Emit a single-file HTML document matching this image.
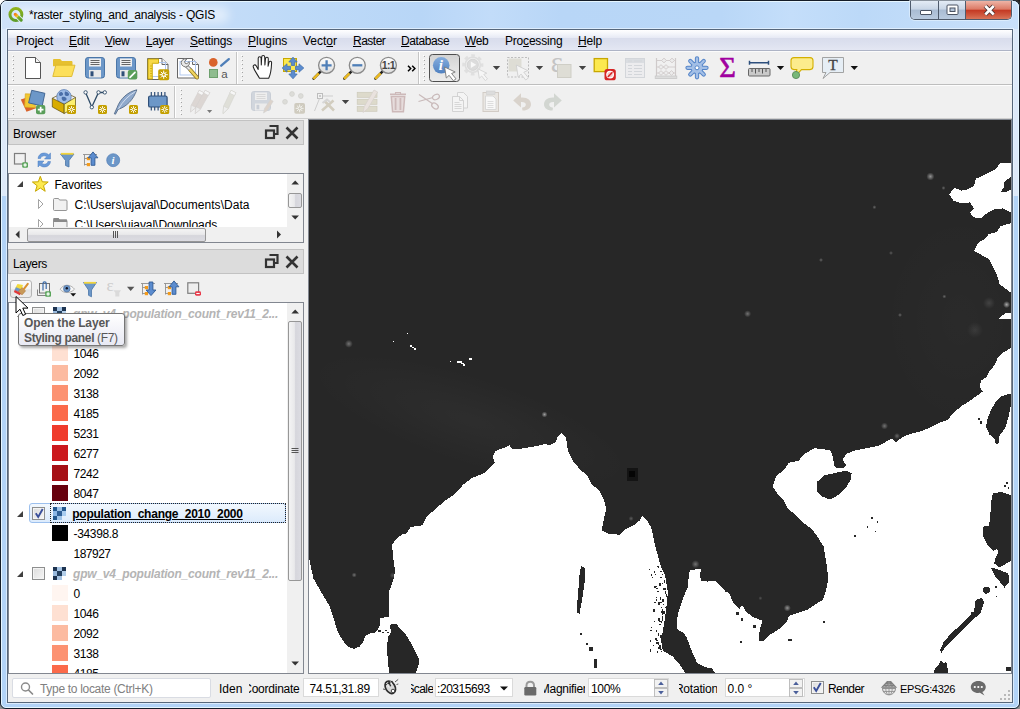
<!DOCTYPE html>
<html lang="en">
<head>
<meta charset="utf-8">
<title>*raster_styling_and_analysis - QGIS</title>
<style>
html,body{margin:0;padding:0;}
body{width:1020px;height:709px;overflow:hidden;background:#fff;position:relative;font-family:"Liberation Sans",sans-serif;font-size:12px;color:#000;}
.abs{position:absolute;}
.t{position:absolute;white-space:pre;line-height:14px;height:14px;}
u{text-decoration:underline;text-underline-offset:1px;text-decoration-skip-ink:none;}
#frame{position:absolute;left:0;top:0;width:1018px;height:707px;border:1px solid #141c28;border-radius:7px 7px 6px 6px;background:#b2d3f7;overflow:hidden;}
#frame .hl{position:absolute;left:0;top:0;right:0;bottom:0;border:1px solid #e6f6ff;border-radius:6px 6px 5px 5px;}
#client{position:absolute;left:7px;top:29px;width:1004px;height:672px;border:1px solid #57677b;background:#f0f0f0;overflow:hidden;box-shadow:0 0 0 1px rgba(235,245,255,.7);}
#menubar{position:absolute;left:0;top:0;width:1004px;height:20px;background:linear-gradient(180deg,#ffffff 0%,#f3f5fa 20%,#e6e9f4 40%,#d9ddec 42%,#dde1ef 70%,#e4e7f3 100%);border-bottom:1px solid #aeb4c6;}
#menubar .t{top:4px;color:#000;}
.tb{position:absolute;left:0;width:1004px;background:#f0f0f0;}
.ico{position:absolute;width:24px;height:24px;}
.ico16{position:absolute;width:16px;height:16px;}
.handle{position:absolute;width:2px;height:28px;background-image:linear-gradient(180deg,#fff 0,#fff 1px,transparent 1px),linear-gradient(180deg,transparent 0,transparent 1px,#a3a3a3 1px,#a3a3a3 2px,transparent 2px);background-size:1px 4px,1px 4px;background-position:0 0,1px 0;background-repeat:repeat-y,repeat-y;}
.sep{position:absolute;width:1px;background:#c5c5c5;border-right:1px solid #fff;}
.arrow{position:absolute;width:0;height:0;border-left:3.5px solid transparent;border-right:3.5px solid transparent;border-top:4px solid #222;}
.docktitle{position:absolute;background:#dcdcdc;border:1px solid #c2c2c2;box-sizing:border-box;}
.tree{position:absolute;background:#fff;border:1px solid #828790;box-sizing:border-box;overflow:hidden;}
.sw{position:absolute;width:16px;height:16px;}
.field{position:absolute;background:#fff;border:1px solid #abadb3;box-sizing:border-box;}
#ltree .sw{left:43px;}
#ltree .n{position:absolute;left:64.500px;white-space:pre;line-height:14px;height:14px;letter-spacing:-0.400px;}
#ltree .g{position:absolute;left:64px;white-space:pre;line-height:14px;height:14px;font-weight:bold;font-style:italic;color:#b4b4b4;letter-spacing:-0.200px;}
#ltree .cb{position:absolute;left:23px;width:11px;height:11px;border:1px solid #8e8f8f;background:linear-gradient(135deg,#dcdcdc 0%,#f6f6f6 100%);box-shadow:inset 0 0 0 1px #f4f4f4;}
#ltree .ex{position:absolute;left:8px;width:0;height:0;border-left:6px solid transparent;border-bottom:6px solid #404040;}
#ltree .ri{position:absolute;left:44px;width:13px;height:13px;}
</style>
</head>
<body>
<div class="abs" style="left:0;top:700px;width:8px;height:9px;background:linear-gradient(45deg,#9a9a9a 0%,#6a6a6a 50%,#222 100%);"></div>
<div class="abs" style="left:1012px;top:700px;width:8px;height:9px;background:linear-gradient(-45deg,#9a9a9a 0%,#6a6a6a 50%,#222 100%);"></div>
<div id="frame">
 <div class="abs" style="left:0;top:0;width:1018px;height:195px;background:#dde9f9;"></div>
 <div class="abs" style="left:0;top:0;width:1018px;height:28px;background:linear-gradient(90deg,#cfe2f9 0px,#c3dcf8 230px,#bedaf8 300px,#b8d6f7 420px,#c2dcf9 490px,#b8d6f7 560px,#b9d7f7 720px,#c4defa 790px,#bcd9f8 860px,#c9e0fa 1018px);"></div>
 <div class="hl"></div>
</div>
<!-- title glow + text -->
<div class="abs" style="left:14px;top:7px;width:215px;height:16px;border-radius:8px;background:rgba(255,255,255,.5);filter:blur(5px);"></div>
<svg class="abs" style="left:6px;top:4px" width="20" height="20" viewBox="6 4 20 20">
 <defs><linearGradient id="qg" x1="0" y1="0" x2="0" y2="1"><stop offset="0" stop-color="#8fb31d"/><stop offset="1" stop-color="#5f9e2a"/></linearGradient>
 <linearGradient id="qt" gradientUnits="userSpaceOnUse" x1="14.500" y1="13.500" x2="21.500" y2="20.500"><stop offset="0" stop-color="#f47c14"/><stop offset="0.28" stop-color="#f6a21e"/><stop offset="0.42" stop-color="#e8d23a"/><stop offset="0.52" stop-color="#7fae2a"/><stop offset="1" stop-color="#559a28"/></linearGradient></defs>
 <circle cx="15.900" cy="14.550" r="5.950" fill="none" stroke="url(#qg)" stroke-width="3"/>
 <path d="M17.800 16.800l4.200 4.200" stroke="#dcebf8" stroke-width="5" stroke-linecap="butt"/>
 <path d="M15.300 14.300l5.900 5.900" stroke="url(#qt)" stroke-width="3.100" stroke-linecap="round"/>
</svg>
<div class="t" style="left:29px;top:8px;font-size:12px;letter-spacing:-0.21px;">*raster_styling_and_analysis - QGIS</div>
<!-- caption buttons -->
<div class="abs" style="left:910px;top:1px;width:102px;height:19px;border:1px solid #4f5b6c;border-top:none;border-radius:0 0 5px 5px;box-sizing:border-box;overflow:hidden;background:#c9d6e8;box-shadow:0 0 0 1px rgba(235,245,255,.55);">
  <div class="abs" style="left:0;top:0;width:27px;height:18px;background:linear-gradient(180deg,#e3ebf5 0%,#c9d6e6 45%,#a9bcd3 50%,#b9cadf 100%);border-right:1px solid #4f5b6c;"></div>
  <div class="abs" style="left:28px;top:0;width:26px;height:18px;background:linear-gradient(180deg,#e3ebf5 0%,#c9d6e6 45%,#a9bcd3 50%,#b9cadf 100%);border-right:1px solid #4f5b6c;"></div>
  <div class="abs" style="left:55px;top:0;width:46px;height:18px;background:linear-gradient(180deg,#eeb4a6 0%,#dc7a66 45%,#c43a24 52%,#d05a40 80%,#d9755a 100%);"></div>
  <div class="abs" style="left:9px;top:9px;width:10px;height:3px;background:#fff;border:1px solid #4a5362;border-radius:1px;"></div>
  <svg class="abs" style="left:34px;top:2px" width="16" height="14" viewBox="0 0 16 14"><rect x="2" y="2" width="11" height="9.500" rx="1" fill="#fff" stroke="#4a5362" stroke-width="1"/><rect x="5" y="5" width="5" height="3.500" fill="#b5c4d8" stroke="#4a5362" stroke-width="1"/></svg>
  <svg class="abs" style="left:70px;top:2px" width="16" height="14" viewBox="0 0 16 14"><path d="M4.300 3 L12.700 11.500 M12.700 3 L4.300 11.500" stroke="#4a3434" stroke-width="4.400" stroke-linecap="butt"/><path d="M4.300 3 L12.700 11.500 M12.700 3 L4.300 11.500" stroke="#fff" stroke-width="2.600" stroke-linecap="butt"/></svg>
</div>
<div class="abs" style="left:1013px;top:0;width:7px;height:7px;background:linear-gradient(225deg,#111 0%,#444 40%,#777 70%,rgba(180,190,200,0) 100%);z-index:-1;"></div>
<div id="client">
<div id="menubar">
 <div class="t" style="left:8px;">Pro<u>j</u>ect</div>
 <div class="t" style="left:61px;"><u>E</u>dit</div>
 <div class="t" style="left:97px;letter-spacing:-0.4px"><u>V</u>iew</div>
 <div class="t" style="left:138px;letter-spacing:-0.4px"><u>L</u>ayer</div>
 <div class="t" style="left:182px;letter-spacing:-0.15px"><u>S</u>ettings</div>
 <div class="t" style="left:240px;"><u>P</u>lugins</div>
 <div class="t" style="left:295px;">Vect<u>o</u>r</div>
 <div class="t" style="left:345px;letter-spacing:-0.5px"><u>R</u>aster</div>
 <div class="t" style="left:393px;letter-spacing:-0.4px"><u>D</u>atabase</div>
 <div class="t" style="left:457px;letter-spacing:-0.4px"><u>W</u>eb</div>
 <div class="t" style="left:497px;letter-spacing:-0.2px">Pro<u>c</u>essing</div>
 <div class="t" style="left:570px;letter-spacing:-0.2px"><u>H</u>elp</div>
</div>
<!-- TOOLBARS (client coords: page - 8, page - 30) -->
<div class="abs" style="left:0;top:21px;width:1004px;height:1px;background:#fbfbfb;"></div>
<div class="abs" style="left:0;top:54px;width:1004px;height:1px;background:#bebebe;"></div>
<div class="abs" style="left:0;top:55px;width:1004px;height:1px;background:#fdfdfd;"></div>
<div class="handle" style="left:4px;top:25px;"></div>
<div class="handle" style="left:233px;top:25px;"></div>
<div class="handle" style="left:415px;top:25px;"></div>
<div class="handle" style="left:4px;top:59px;"></div>
<div class="handle" style="left:172px;top:59px;"></div>
<div class="sep" style="left:228px;top:22px;height:32px;"></div>
<div class="sep" style="left:410px;top:22px;height:32px;"></div>
<div class="sep" style="left:166px;top:56px;height:32px;"></div>
<svg class="abs" style="left:0;top:21px;overflow:visible" width="1004" height="68" viewBox="8 51 1004 68" font-family="Liberation Sans, sans-serif">
<defs>
 <linearGradient id="gLens" x1="0" y1="0" x2="0" y2="1"><stop offset="0" stop-color="#ffffff"/><stop offset="1" stop-color="#dcdcdc"/></linearGradient>
 <linearGradient id="gBtn" x1="0" y1="0" x2="0" y2="1"><stop offset="0" stop-color="#d2d2d2"/><stop offset="0.5" stop-color="#e2e2e2"/><stop offset="1" stop-color="#ebebeb"/></linearGradient>
 <linearGradient id="gInfo" x1="0" y1="0" x2="0" y2="1"><stop offset="0" stop-color="#86aede"/><stop offset="1" stop-color="#4f80c0"/></linearGradient>
 <g id="badge"><rect x="0" y="0" width="9" height="9" rx="1.600" fill="#c4a000"/><path d="M4.500 1.100v6.800M1.100 4.500h6.800M2.100 2.100l4.800 4.800M6.900 2.100l-4.800 4.800" stroke="#fff" stroke-width="0.900"/><circle cx="4.500" cy="4.500" r="0.900" fill="#c4a000"/></g>
 <g id="floppy"><rect x="0.5" y="0.5" width="19" height="20.5" rx="2.6" fill="#6c97c8" stroke="#4a76a8"/><rect x="4" y="1.5" width="12" height="8" fill="#efefef"/><path d="M5.5 3.5h9M5.5 5.5h9M5.5 7.5h9" stroke="#555" stroke-width="0.9"/><rect x="4" y="13" width="12" height="7.5" fill="#e9e9e9"/><rect x="5.5" y="14.3" width="3" height="5" fill="#2f4f78"/></g>
 <g id="lens"><path d="M-5.800 6.100 L-13 13.300" stroke="#222" stroke-width="2.600" stroke-linecap="round"/><path d="M-7.800 8.100 L-13.200 13.500" stroke="#eab920" stroke-width="2.600" stroke-linecap="butt"/><circle cx="0" cy="0" r="8" fill="url(#gLens)" stroke="#8a8a8a" stroke-width="1.3"/></g>
</defs>
<!-- ROW 1 -->
<!-- new -->
<path d="M25.5 57.5h10l5 5v16h-15z" fill="#fff" stroke="#555"/><path d="M35.5 57.5v5h5" fill="#f4f4f4" stroke="#555"/>
<!-- open -->
<path d="M53 60.2c0-.7.5-1.2 1.2-1.2h6l1.8 2h9.3c.7 0 1.2.5 1.2 1.200v4h-19.500z" fill="#e6c02f"/>
<path d="M52.800 76.500l3-11.300h19.200l-3.300 11.300z" fill="#fcdf5a" stroke="#dcb82c" stroke-width="0.9"/>
<!-- save -->
<use href="#floppy" x="85" y="57"/>
<!-- save as -->
<use href="#floppy" x="116" y="57"/>
<rect x="127.800" y="70" width="9.500" height="9.500" rx="2" fill="#5a9e5a"/><path d="M130 77.300l5-5" stroke="#fff" stroke-width="1.700" stroke-linecap="round"/>
<!-- new layout -->
<path d="M147.500 58.500h14.500l6 6v15h-20.500z" fill="#fff" stroke="#666"/><path d="M162 58.500v6h6" fill="#f4f4f4" stroke="#666"/>
<rect x="150.500" y="62.500" width="15" height="14" fill="none" stroke="#a9c3ee" stroke-width="0.9"/>
<path d="M148 59h10.500v4.300h-6.200v15.700h-4.300z" fill="#f7d94a" stroke="#c8a700" stroke-width="0.9"/>
<path d="M150 66h2M150 68.500h2M150 71h2M150 73.500h2M150 76h2" stroke="#c8a700" stroke-width="0.7"/>
<rect x="158.200" y="69.200" width="11" height="11" rx="1.800" fill="#c4a000"/><circle cx="163.700" cy="74.700" r="1.700" fill="none" stroke="#fff" stroke-width="1.100"/><path d="M163.700 70.600v2.400M163.700 76.400v2.400M159.600 74.700h2.400M165.400 74.700h2.400M160.800 71.800l1.700 1.700M164.900 75.900l1.700 1.700M166.600 71.800l-1.700 1.700M162.500 75.900l-1.700 1.700" stroke="#fff" stroke-width="1"/>
<!-- layout manager -->
<path d="M177.500 58.500h15l6 6v13.500h-21z" fill="#fff" stroke="#666"/><path d="M192.500 58.500v6h6" fill="#f4f4f4" stroke="#666"/>
<rect x="180" y="61.500" width="15.500" height="13.500" fill="none" stroke="#a9c3ee" stroke-width="0.9"/>
<path d="M190 69.500l7 8" stroke="#8a7420" stroke-width="4" stroke-linecap="round"/><path d="M190 69.500l7 8" stroke="#f0d460" stroke-width="2.400" stroke-linecap="round"/>
<path d="M189.800 69.300l-3.300-3.300" stroke="#777" stroke-width="3.600"/><path d="M189.800 69.300l-3.300-3.300" stroke="#e4e4e4" stroke-width="2"/>
<path d="M183.300 66.200a3.900 3.900 0 0 0 5.900-4.600l-2.300 2.100-1.900-.5-.4-1.900 2.200-2a3.900 3.900 0 0 0-5.100 5.400z" fill="#e8e8e8" stroke="#6e6e6e" stroke-width="0.900" stroke-linejoin="round"/>
<!-- style manager -->
<circle cx="213.300" cy="62.400" r="4.300" fill="#d9632b"/>
<path d="M221.200 65.700l7.600-6.600" stroke="#4f7fb8" stroke-width="2.300" stroke-linecap="round"/>
<rect x="209.500" y="69.500" width="8" height="8" fill="#8fbc8f" stroke="#6da06d"/>
<text x="221.300" y="77.600" font-size="11.500" fill="#555">a</text>
<!-- pan hand -->
<path d="M259.500 78.300C257.500 74.500 254.300 70.500 253.300 67c-.6-2.200 1.900-2.900 3-1l1.900 3.400V58.300c0-2.100 2.900-2.100 2.900 0l.2 6.700.4-8c0-2.100 3-2.100 3 0l.2 8 .6-6.400c.2-2 2.900-1.800 2.800.2l-.2 7.400.9-3.800c.4-1.800 2.700-1.500 2.600.3-.2 6-.3 10-2.900 15.600z" fill="#fff" stroke="#222" stroke-width="1.050" stroke-linejoin="round"/>
<!-- pan to selection -->
<rect x="283.500" y="58.500" width="13" height="13" fill="#fce94f" stroke="#c8a700"/>
<g fill="#5b8ccf" stroke="#4673b0" stroke-width="0.8" stroke-linejoin="round">
<path d="M293 57.200l4.200 4.800h-2.500v3.500h-3.400v-3.500h-2.500z"/>
<path d="M293 78.800l4.200-4.800h-2.500v-3.500h-3.400v3.500h-2.500z"/>
<path d="M282.200 68l4.800-4.200v2.500h3.500v3.400h-3.500v2.500z"/>
<path d="M303.800 68l-4.800-4.200v2.500h-3.500v3.400h3.500v2.500z"/>
</g>
<!-- zoom in -->
<use href="#lens" x="326.600" y="65.300"/><path d="M321.600 65.300h10M326.600 60.300v10" stroke="#4f7fb8" stroke-width="2.300"/>
<!-- zoom out -->
<use href="#lens" x="357.300" y="65.300"/><path d="M352.300 65.300h10" stroke="#4f7fb8" stroke-width="2.300"/>
<!-- zoom 1:1 -->
<use href="#lens" x="388.400" y="65.300"/><text x="388.300" y="69" font-size="10.500" font-weight="bold" fill="#444" text-anchor="middle" letter-spacing="-0.700">1:1</text>
<!-- chevron -->
<path d="M408 65.800l2.700 2.700-2.700 2.700M412.200 65.800l2.700 2.700-2.700 2.700" fill="none" stroke="#000" stroke-width="1.500"/>
<!-- identify -->
<rect x="429.500" y="54.500" width="30" height="27" rx="3" fill="url(#gBtn)" stroke="#4e4e4e"/>
<circle cx="441.200" cy="65.300" r="8.300" fill="url(#gInfo)"/>
<text x="440.800" y="70.200" font-family="Liberation Serif, serif" font-size="15" font-weight="bold" font-style="italic" fill="#fff" text-anchor="middle">i</text>
<path d="M444.600 67l1.700 11 2.800-2.700 4.300 5.500 2.600-2-4.400-5.300 3.600-1.500z" fill="#fff" stroke="#777" stroke-width="0.9" stroke-linejoin="round"/>
<!-- run action (disabled) -->
<g><circle cx="472.800" cy="64.800" r="9.300" fill="none" stroke="#e0e0e0" stroke-width="2.600" stroke-dasharray="3.700 3.600" stroke-dashoffset="1.800"/><circle cx="472.800" cy="64.800" r="7.600" fill="#f0f0f0" stroke="#dedede" stroke-width="1.600"/><circle cx="472.800" cy="64.800" r="5.600" fill="#dcdcdc" stroke="#d0d0d0" stroke-width="0.800"/><path d="M470.800 61.600l5.400 3.200-5.400 3.200z" fill="#f8f8f8"/><path d="M477.800 68.800l1.500 9.500 2.400-2.300 3.600 4.600 2.200-1.700-3.700-4.500 3-1.200z" fill="#f6f6f6" stroke="#d4d4d4" stroke-width="0.900" stroke-linejoin="round"/></g>
<path d="M492.800 66h7.400l-3.700 4z" fill="#444"/>
<!-- select (disabled) -->
<rect x="507.500" y="57.500" width="21" height="19.500" fill="none" stroke="#bdbdbd" stroke-dasharray="2 1.500"/>
<rect x="508.500" y="58.500" width="13" height="13" fill="#deddd5"/>
<path d="M516.300 65l1.800 12 3-2.900 4.600 5.900 2.800-2.100-4.700-5.700 3.900-1.600z" fill="#f4f4f4" stroke="#cfcfcf" stroke-width="0.9" stroke-linejoin="round"/>
<path d="M535.800 66h7.400l-3.700 4z" fill="#444"/>
<!-- select by expression (disabled) -->
<text x="550.800" y="71.800" font-family="Liberation Serif, serif" font-size="28.500" fill="#c4c4c4">ε</text>
<rect x="557.500" y="64.500" width="13.500" height="13" fill="#deddd5" stroke="#cfcec6"/>
<path d="M578.800 66h7.400l-3.700 4z" fill="#444"/>
<!-- deselect -->
<rect x="594.200" y="58.600" width="13.300" height="13" fill="#fce94f" stroke="#c8a700" stroke-width="1.300"/>
<rect x="604.500" y="69" width="11.300" height="11.300" rx="2.600" fill="#d62424"/><circle cx="610.100" cy="74.600" r="3.300" fill="#f6c6c6" stroke="#fff" stroke-width="1.200"/><path d="M607.800 77l4.600-4.700" stroke="#d62424" stroke-width="1.500"/>
<!-- attribute table (disabled) -->
<rect x="625.500" y="58.500" width="19" height="19" fill="#ececee" stroke="#d3d6da"/><rect x="626" y="59" width="18" height="4" fill="#dadde1"/>
<path d="M628 61h4M634 61h8M628 65.500h4M634 65.500h8M628 68.500h4M634 68.500h8M628 71.500h4M634 71.500h8M628 74.500h4M634 74.500h8" stroke="#d3d6da" stroke-width="1"/>
<!-- field calculator (disabled) -->
<g stroke="#cfcaca" fill="none"><path d="M656.500 58v18M675.500 58v18" stroke-width="1.200"/><rect x="655.200" y="76" width="21.600" height="2.500" fill="#dcdcdc" stroke="#c8c8c8" stroke-width="0.8"/><path d="M656.500 60.500h19M656.500 67h19M656.500 73h19" stroke-width="0.9"/>
<path d="M661.500 60.500l2.500-2.300 2.500 2.300-2.500 2.300zM669.500 60.500l2.500-2.300 2.500 2.300-2.500 2.300zM658.500 67l2.500-2.300 2.500 2.300-2.500 2.300zM663.500 67l2.500-2.300 2.500 2.300-2.500 2.300zM658.500 73l2.500-2.300 2.500 2.300-2.500 2.300zM663.500 73l2.500-2.300 2.500 2.300-2.500 2.300zM669 73l2.500-2.300 2.500 2.300-2.500 2.300z" fill="#ececec" stroke-width="0.9"/></g>
<!-- processing gear -->
<g transform="translate(697 67.800)">
<g stroke="#5585c8" stroke-width="4.300" stroke-linecap="round"><path d="M0 -5v-4.500M0 5v4.500M-5 0h-4.500M5 0h4.500M3.540 -3.540l3.180 -3.180M-3.540 3.540l-3.180 3.180M3.540 3.540l3.180 3.180M-3.540 -3.540l-3.180 -3.180"/></g>
<circle r="6.400" fill="#5585c8"/>
<g stroke="#a3bfe6" stroke-width="2.300" stroke-linecap="round"><path d="M0 -5v-4.500M0 5v4.500M-5 0h-4.500M5 0h4.500M3.540 -3.540l3.180 -3.180M-3.540 3.540l-3.180 3.180M3.540 3.540l3.180 3.180M-3.540 -3.540l-3.180 -3.180"/></g>
<circle r="5.400" fill="#a3bfe6"/><circle r="2" fill="#fff" stroke="#5585c8" stroke-width="1"/>
</g>
<!-- sigma -->
<text x="719.300" y="77.400" font-family="Liberation Serif, serif" font-size="28.500" fill="#a1009f" stroke="#a1009f" stroke-width="0.600">Σ</text>
<!-- measure -->
<path d="M749.500 62.800h19M749.500 60.800v4M768.500 60.800v4" stroke="#2d4f7c" stroke-width="1.500"/>
<rect x="748.500" y="68.500" width="21.500" height="7.500" rx="1" fill="#c9c9c9" stroke="#666"/><path d="M752 69v3M755.500 69v4.500M759 69v3M762.500 69v4.500M766 69v3" stroke="#555" stroke-width="1"/>
<path d="M776.800 66h7.400l-3.700 4z" fill="#111"/>
<!-- map tips -->
<path d="M794 57.600h16c1.700 0 3 1.300 3 3v6c0 1.700-1.300 3-3 3h-8.500l-5.500 6 .8-6h-2.800c-1.700 0-3-1.300-3-3v-6c0-1.700 1.300-3 3-3z" fill="#fcec8c" stroke="#d4b000" stroke-width="1.100"/>
<circle cx="796" cy="75" r="3.600" fill="#78b878" stroke="#5a8a5a" stroke-width="0.9"/>
<!-- text annotation -->
<path d="M822.500 57.500h21v15h-13.500l-7 6 3-6h-3.500z" fill="#e6eef5" stroke="#9a9a9a" stroke-width="0.9"/>
<text x="833" y="70.300" font-family="Liberation Serif, serif" font-size="15.500" fill="#444" text-anchor="middle" stroke="#444" stroke-width="0.300">T</text>
<path d="M850.600 66h7.400l-3.700 4z" fill="#111"/>

<!-- ROW 2 -->
<!-- data source manager -->
<path d="M20.800 99.500l10-3.300 5.200 12-9.500 3.600z" fill="#d9632b"/>
<path d="M25.300 93.800l10.500.4-.6 13.600-10.500-.8z" fill="#f2c832" stroke="#d8a820" stroke-width="0.700"/>
<path d="M31.700 90.300l13.200 3-2.700 12.600-13.600-3z" fill="#6c97c8" stroke="#3b5f8c" stroke-width="0.900"/>
<rect x="36" y="105" width="9.300" height="9.300" rx="2" fill="#5a9e5a"/><path d="M40.650 106.800v5.700M37.800 109.650h5.700" stroke="#fff" stroke-width="1.700"/>
<!-- new geopackage cube -->
<circle cx="64" cy="96.800" r="7.200" fill="#9fbce6" stroke="#5a7eb4" stroke-width="0.8"/>
<path d="M59.500 92.500c1.500-1 3-.5 3.500 1s-1 2.500-2.500 2.500-2-2-1-3.500zM65 91.500c2 0 3.500 1 4 2.500s-1 2-2.500 2-2.500-2-1.500-4.500zM62 97c1.500-.5 4 0 4.500 1.500s-1 2.500-2.500 2.500-3-2.500-2-4z" fill="#4a6ea8"/>
<path d="M52.300 98.200l11.900 6v9.300l-11.900-6.500z" fill="#d8ac00" stroke="#5a4a10" stroke-width="0.700"/>
<path d="M64.200 104.200l11.300-6.800v9.600l-11.300 6.500z" fill="#fcf070" stroke="#5a4a10" stroke-width="0.700"/>
<path d="M52.300 98.200l4.500-2.300M75.500 97.400l-4.300-2" stroke="#5a4a10" stroke-width="0.700"/>
<use href="#badge" x="67" y="105"/>
<!-- new shapefile -->
<path d="M85.600 92.500l6.200 14.500 6.700-14.500h6.200" fill="none" stroke="#2d4a66" stroke-width="1.300"/>
<g fill="#fff" stroke="#2d4a66" stroke-width="0.900"><circle cx="85.600" cy="92.400" r="1.700"/><circle cx="91.800" cy="107.200" r="1.700"/><circle cx="98.500" cy="92.400" r="1.700"/><circle cx="104.800" cy="92.400" r="1.700"/></g>
<use href="#badge" x="98" y="105"/>
<!-- spatialite feather -->
<path d="M136.800 89.800c-8.500 2-16.500 8.500-19.800 18l-2.700 6 1.200.400 2.600-4.800c8-2.500 15.500-9.600 18.700-19.600z" fill="#8fa9cc" stroke="#48607f" stroke-width="0.800"/>
<path d="M135.500 91.500c-7 4-13 10-17 17.500" fill="none" stroke="#dfe9f6" stroke-width="0.800"/>
<use href="#badge" x="129" y="105"/>
<!-- virtual layer chip -->
<path d="M151.300 92v4M154.700 92v4M158.100 92v4M161.500 92v4M164.900 92v4M151.300 107v3.500M154.700 107v3.500M158.100 107v3.500" stroke="#2f4f78" stroke-width="1.200"/>
<rect x="148.600" y="96" width="18.500" height="11" rx="1.600" fill="#6c97c8" stroke="#2f4f78" stroke-width="1.200"/>
<use href="#badge" x="160.200" y="105"/>
<!-- disabled: current edits -->
<g stroke="#d4d0ce" stroke-width="0.600"><path d="M199.200 90.300l4.600 2.400-7.900 14.800-5.400 4.500.8-6.900z" fill="#dcd6d3"/><path d="M199.200 90.300l4.600 2.400-1.500 2.800-4.600-2.400z" fill="#f6f6f6"/><path d="M191.300 105.100l4.600 2.400-5.400 4.500z" fill="#ececec"/>
<path d="M205.200 90.300l4.600 2.400-9.200 16.400-5.400 4.500.8-6.900z" fill="#dcd6d3"/><path d="M205.200 90.300l4.600 2.400-1.500 2.800-4.600-2.400z" fill="#f6f6f6"/><path d="M196 106.700l4.600 2.400-5.400 4.500z" fill="#ececec"/></g>
<path d="M207 109.900h5.200l-2.600 3z" fill="#7a7a7a"/>
<!-- toggle editing -->
<g stroke="#d4d4ce" stroke-width="0.600"><path d="M231.100 90.300l4.800 2.400-7.500 15.800-5.400 5.100.6-7.500z" fill="#dfdfd8"/><path d="M231.100 90.300l4.800 2.400-1.400 2.900-4.800-2.400z" fill="#f6f6f6"/><path d="M223.600 106.100l4.800 2.400-5.400 5.100z" fill="#eeeeee"/></g>
<!-- save edits -->
<g opacity="0.55"><rect x="251.500" y="91.500" width="19" height="19" rx="2.400" fill="#b9c2cf" stroke="#aab4c2"/><rect x="255" y="92.500" width="12" height="7.500" fill="#eee"/><path d="M256.500 94.500h9M256.500 96.500h9M256.500 98.500h9" stroke="#bbb" stroke-width="0.800"/><rect x="255" y="103.500" width="12" height="7" fill="#eaeaea"/><rect x="256.500" y="104.800" width="2.800" height="4.500" fill="#aab4c2"/><path d="M263.500 113l1-4.500 6-9 2.700 1.700-5.800 9.300z" fill="#cdbcae" stroke="#bbb" stroke-width="0.600"/></g>
<!-- add point feature -->
<g fill="#dcdcd8" stroke="#d0d0cc" stroke-width="0.700"><circle cx="292" cy="94" r="2.400"/><circle cx="300.800" cy="96" r="2.400"/><circle cx="285" cy="101.800" r="2.400"/></g>
<rect x="294.300" y="103" width="10.700" height="10.700" rx="1.800" fill="#cfcbbf"/><circle cx="299.650" cy="108.350" r="1.600" fill="none" stroke="#f4f4f0" stroke-width="1"/><path d="M299.650 104.400v2.300M299.650 110v2.300M295.700 108.350h2.300M301.300 108.350h2.300M296.900 105.600l1.600 1.600M300.800 109.500l1.600 1.600M302.400 105.600l-1.600 1.600M298.500 109.500l-1.600 1.600" stroke="#f4f4f0" stroke-width="0.900"/>
<!-- vertex tool -->
<rect x="317.500" y="93.500" width="5" height="5" fill="#f2f2f2" stroke="#bdbdbd"/><circle cx="320" cy="96" r="1" fill="#bdbdbd"/><path d="M322.500 96h10.500M319.500 98.500l-5 12.500" stroke="#cacaca" stroke-width="0.900"/>
<path d="M322 110.500l11.500-10M324.500 101l9.500 9.500" stroke="#d2cdbf" stroke-width="2.600"/><path d="M322.500 103l4.500-3.500 3 2.500" fill="none" stroke="#d6d6d6" stroke-width="2"/>
<path d="M341.800 100h7.400l-3.700 4z" fill="#444"/>
<!-- modify attributes -->
<g fill="#dddacb" stroke="#cdcaba" stroke-width="0.700"><rect x="357.200" y="92.300" width="19.800" height="5"/><rect x="357.200" y="99.300" width="19.800" height="5"/><rect x="357.200" y="106.300" width="19.800" height="5"/></g>
<path d="M363 112.500l1.300-6 9.700-16.500 3.600 2-9.800 16.700z" fill="#e9e2de" stroke="#d6d0cc" stroke-width="0.700"/>
<!-- delete -->
<g fill="none" stroke="#cdb9b9"><path d="M390 94.300h16" stroke-width="1.600"/><path d="M395.500 94v-1.500h5v1.500" stroke-width="1.100"/><path d="M391.300 96.500l1.300 15.300h10.800l1.300-15.300z" stroke-width="1.500" fill="#e6dcdc"/><path d="M395.600 98v12M400.400 98v12" stroke-width="1.800"/></g>
<!-- cut -->
<g fill="none" stroke="#c9baba" stroke-width="1.200"><path d="M419 94.500l14 9.500M418.500 101.500l14.500-4"/><ellipse cx="436" cy="97" rx="3.600" ry="2.500" transform="rotate(-25 436 97)"/><ellipse cx="435" cy="106" rx="3.600" ry="2.500" transform="rotate(35 435 106)"/></g>
<!-- copy -->
<g fill="#f4f4f4" stroke="#cfcfcf" stroke-width="0.900"><path d="M457.500 92.500h6l4 4v11.500h-10z"/><path d="M452.500 96.500h7l4 4v11h-11z"/><path d="M459.500 96.500v4h4" fill="none"/><path d="M454.500 102.500h5M454.500 104.500h7M454.500 106.500h7M454.500 108.500h7" stroke-width="0.800"/></g>
<!-- paste -->
<rect x="483" y="92.500" width="15.500" height="19" fill="#e9e6e2" stroke="#d2ccc6"/><rect x="486.500" y="91" width="8.500" height="3.500" fill="#dcdcdc" stroke="#d0d0d0" stroke-width="0.600"/>
<path d="M485.500 96h7.500l3 3v10.500h-10.500z" fill="#f8f8f8" stroke="#d2d2d2" stroke-width="0.800"/><path d="M487.500 101.500h6M487.500 103.500h6M487.500 105.500h6M487.500 107.500h6" stroke="#d6d6d6" stroke-width="0.800"/>
<!-- undo -->
<path d="M513.200 100.500l7.800-7.300v4.300c6.500-.5 10 3 10 6.800 0 4-3.500 6.500-8.500 6.300l-.5-2.800c2.500-.2 3.800-1.500 3.800-3.200 0-1.800-1.600-2.700-4.800-2.500v5.300z" fill="#d9d3cc"/>
<!-- redo -->
<path d="M561.800 100.500l-7.800-7.300v4.300c-6.500-.5-10 3-10 6.800 0 4 3.500 6.500 8.500 6.300l.5-2.800c-2.500-.2-3.800-1.500-3.800-3.200 0-1.800 1.600-2.700 4.800-2.500v5.300z" fill="#d2d6d1"/>
</svg>
<!-- wrapper using page coordinates -->
<div id="pg" class="abs" style="left:-8px;top:-30px;width:1020px;height:709px;">
<div class="abs" style="left:8px;top:118px;width:1004px;height:1px;background:#cfcfcf;"></div>
<!-- BROWSER DOCK -->
<div class="docktitle" style="left:8px;top:120px;width:296px;height:25px;"></div>
<div class="t" style="left:13px;top:127.400px;letter-spacing:-0.140px;">Browser</div>
<svg class="abs" style="left:264px;top:124px" width="36" height="17" viewBox="264 124 36 17"><path d="M269.500 126h8v8h-2.500" fill="none" stroke="#333" stroke-width="2.200"/><rect x="266" y="130.500" width="8" height="7.500" fill="#dcdcdc" stroke="#333" stroke-width="2.200"/><path d="M286.500 127.500l11 11M297.500 127.500l-11 11" stroke="#333" stroke-width="2.600"/></svg>
<!-- browser toolbar icons -->
<svg class="abs" style="left:8px;top:148px" width="296" height="24" viewBox="8 148 296 24">
 <!-- add selected layers -->
 <rect x="14.500" y="153.500" width="10.800" height="10.500" fill="#f0f0f0" stroke="#7e7e7e" stroke-width="1.200"/><rect x="22.200" y="162.200" width="5.800" height="5.600" rx="1.200" fill="#5aa45a"/><circle cx="25.100" cy="165" r="1.700" fill="#e8f4e8"/>
 <!-- refresh -->
 <path d="M38 158.500c.3-3.500 3-5.500 6.200-5.500 1.800 0 3.300.7 4.500 1.800l1.800-1.800v6h-6l2.200-2.200c-.7-.6-1.500-1-2.500-1-1.800 0-3.200 1-3.600 2.700z" fill="#6a9ad8" stroke="#4a7cc0" stroke-width="0.500"/>
 <path d="M50.500 161.500c-.3 3.500-3 5.500-6.200 5.500-1.800 0-3.300-.7-4.500-1.800l-1.800 1.800v-6h6l-2.200 2.200c.7.600 1.500 1 2.500 1 1.800 0 3.200-1 3.600-2.700z" fill="#6a9ad8" stroke="#4a7cc0" stroke-width="0.500"/>
 <!-- filter -->
 <path d="M60.500 154h13.500l-5 6.500v6.500l-3.500-1.500v-5z" fill="#6c97c8" stroke="#4a76a8" stroke-width="0.800"/><path d="M61 153.800h12.500" stroke="#f2d43c" stroke-width="1.800"/>
 <!-- collapse all -->
 <path d="M83 154.500h14M84.500 154.500v11M84.500 158.500h2.500M84.500 164.500h2.500" fill="none" stroke="#8f8f8f" stroke-width="0.900"/><rect x="86.800" y="157" width="3.200" height="3.200" fill="#f39b1c"/><rect x="86.800" y="163" width="3.200" height="3.200" fill="#f39b1c"/>
 <path d="M93 151.900l4.900 5.900h-3v7.500h-3.800v-7.500h-3z" fill="#5b8ccf" stroke="#2f5a94" stroke-width="0.900" stroke-linejoin="round"/>
 <!-- info -->
 <circle cx="113.200" cy="160.200" r="6.500" fill="#6c97c8" stroke="#5580b8" stroke-width="0.700"/><text x="113" y="164.300" font-family="Liberation Serif, serif" font-size="11" font-weight="bold" font-style="italic" fill="#fff" text-anchor="middle">i</text>
</svg>
<!-- browser tree -->
<div class="tree" style="left:8px;top:173px;width:296px;height:70px;">
 <svg class="abs" style="left:0;top:0" width="80" height="60" viewBox="9 174 80 60">
  <path d="M23 181v6h-6z" fill="#404040"/>
  <path d="M40.3 176.300L42.300 181.800L48.200 182L43.500 185.700L45.200 191.300L40.300 188L35.400 191.300L37.100 185.700L32.400 182L38.300 181.800z" fill="#fce94f" stroke="#c8a700" stroke-width="1" stroke-linejoin="round"/>
  <path d="M38.500 199.500l4.500 4.500-4.500 4.500z" fill="#fff" stroke="#999" stroke-width="0.900"/>
  <path d="M53.500 199.500c0-.6.400-1 1-1h4l1 1.500h6.500c.6 0 1 .4 1 1v8.500c0 .6-.4 1-1 1h-11.500c-.6 0-1-.4-1-1z" fill="#f1f1f1" stroke="#8a8a8a" stroke-width="0.900"/>
  <path d="M38.500 219.500l4.500 4.500-4.500 4.500z" fill="#fff" stroke="#999" stroke-width="0.900"/>
  <path d="M53.500 219.500c0-.6.400-1 1-1h4l1 1.500h6.500c.6 0 1 .4 1 1v8.500c0 .6-.4 1-1 1h-11.500c-.6 0-1-.4-1-1z" fill="#f1f1f1" stroke="#8a8a8a" stroke-width="0.900"/><path d="M53.500 218h5l1 1.500h7.500v2.500h-13.500z" fill="#8a8a8a"/>
 </svg>
 <div class="t" style="left:45.500px;top:4.400px;letter-spacing:-0.230px;">Favorites</div>
 <div class="t" style="left:65.500px;top:24.200px;letter-spacing:0.030px;">C:\Users\ujaval\Documents\Data</div>
 <div class="t" style="left:65.500px;top:44.200px;letter-spacing:-0.050px;">C:\Users\ujaval\Downloads</div>
 <!-- h scrollbar -->
 <div class="abs" style="left:0;top:53px;width:278px;height:15px;background:#f0f0f0;"></div>
 <div class="abs" style="left:278px;top:53px;width:16px;height:15px;background:#f0f0f0;"></div>
 <div class="abs" style="left:18px;top:54px;width:177px;height:12px;border:1px solid #979797;border-radius:2px;background:linear-gradient(180deg,#f4f4f4 0%,#e9e9eb 45%,#d6d6dc 55%,#dcdce2 100%);"></div>
 <svg class="abs" style="left:0;top:53px" width="294" height="15" viewBox="9 227 294 15"><path d="M15.500 234.500l4-4v8z" fill="#333"/><path d="M281 234.500l-4-4v8z" fill="#333"/><path d="M113.500 231v7M115.500 231v7M117.500 231v7" stroke="#555" stroke-width="1"/></svg>
 <!-- v scrollbar -->
 <div class="abs" style="left:278px;top:0;width:16px;height:53px;background:#f0f0f0;"></div>
 <div class="abs" style="left:279px;top:19px;width:12px;height:13px;border:1px solid #979797;border-radius:2px;background:linear-gradient(90deg,#f4f4f4 0%,#e9e9eb 45%,#d6d6dc 55%,#dcdce2 100%);"></div>
 <svg class="abs" style="left:278px;top:0" width="16" height="53" viewBox="287 174 16 53"><path d="M295.200 180.500l3.800 4h-7.600z" fill="#333"/><path d="M295.200 219.500l3.800-4h-7.600z" fill="#333"/></svg>
</div>
<!-- LAYERS DOCK -->
<div class="docktitle" style="left:8px;top:249px;width:296px;height:25px;"></div>
<div class="t" style="left:13px;top:256.500px;letter-spacing:-0.330px;">Layers</div>
<svg class="abs" style="left:264px;top:253px" width="36" height="17" viewBox="264 124 36 17"><path d="M269.500 126h8v8h-2.500" fill="none" stroke="#333" stroke-width="2.200"/><rect x="266" y="130.500" width="8" height="7.500" fill="#dcdcdc" stroke="#333" stroke-width="2.200"/><path d="M286.500 127.500l11 11M297.500 127.500l-11 11" stroke="#333" stroke-width="2.600"/></svg>
<!-- layers toolbar -->
<div class="abs" style="left:10px;top:280px;width:22px;height:18px;border:1px solid #b5b5b5;border-radius:3px;background:linear-gradient(180deg,#fbfbfb 0%,#f2f2f2 50%,#e4e4e4 55%,#ededed 100%);box-sizing:border-box;"></div>
<svg class="abs" style="left:8px;top:277px" width="296" height="24" viewBox="8 277 296 24">
 <!-- style brush -->
 <path d="M15 288.500l2.500-4.500 5.500 1-2 5.500z" fill="#f2da3c"/><path d="M14.300 290.300l1.800-3 5 2-1.800 3z" fill="#6c97c8"/><path d="M13.800 292l1-2 6.500 3-1.500 2.200z" fill="#e03a3a"/>
 <path d="M18.300 291.200l4-3.700 3.300 3.400-3.600 4z" fill="#c89858" stroke="#a87838" stroke-width="0.500"/><path d="M24 288.800l3.800-5" stroke="#d9902f" stroke-width="2" stroke-linecap="round"/>
 <!-- add group -->
 <path d="M37.500 289.500v6h9" fill="none" stroke="#777" stroke-width="0.900"/><rect x="39.500" y="283.500" width="10" height="9.500" fill="#f0f0f0" stroke="#666" stroke-width="0.900"/><path d="M43 290.500v-7c0-2.300 3.200-2.300 3.200 0v5.500" fill="none" stroke="#3a6aa8" stroke-width="1.200"/><rect x="45.200" y="291.200" width="5.800" height="5.600" rx="1" fill="#5aa45a"/><circle cx="48.100" cy="294" r="1.700" fill="#e8f4e8"/>
 <!-- eye -->
 <path d="M60.200 289.200c3-5.300 10.500-5.300 14.300 0-4 4.500-11.300 4.500-14.300 0z" fill="#f6f6f6" stroke="#a8a8a8" stroke-width="0.900"/><circle cx="66.800" cy="288.700" r="3.300" fill="#6c97c8" stroke="#4a6ea0" stroke-width="0.700"/><circle cx="66.800" cy="288.300" r="1.200" fill="#112"/><path d="M70.300 293.300h5.800l-2.900 3.200z" fill="#111"/>
 <!-- filter -->
 <path d="M83.500 282.500h13l-5 7.500v6.800l-3-1.500v-5.300z" fill="#6c97c8" stroke="#4a76a8" stroke-width="0.800" stroke-linejoin="round"/><path d="M84 282.800h12" stroke="#f2d43c" stroke-width="1.800"/>
 <!-- expression filter disabled -->
 <text x="106.500" y="291" font-family="Liberation Serif, serif" font-size="17" fill="#cdcdcd">ε</text><path d="M113.500 290.300h7.500l-1.700 2.500v3.700h-4v-3.700z" fill="#dadada"/>
 <path d="M127 286.800h7.400l-3.700 4.100z" fill="#555"/>
 <!-- expand all -->
 <path d="M141 283.500h14M142.500 283.500v11M142.500 287.500h2.500M142.500 293.500h2.500" fill="none" stroke="#8f8f8f" stroke-width="0.900"/><rect x="144.800" y="286" width="3.200" height="3.200" fill="#f39b1c"/><rect x="144.800" y="292" width="3.200" height="3.200" fill="#f39b1c"/>
 <path d="M151 295.600l4.900-5.600h-3v-8h-3.800v8h-3z" fill="#5b8ccf" stroke="#2f5a94" stroke-width="0.900" stroke-linejoin="round"/>
 <!-- collapse all -->
 <path d="M164 283.500h14M165.500 283.500v11M165.500 287.500h2.500M165.500 293.500h2.500" fill="none" stroke="#8f8f8f" stroke-width="0.900"/><rect x="167.800" y="286" width="3.200" height="3.200" fill="#f39b1c"/><rect x="167.800" y="292" width="3.200" height="3.200" fill="#f39b1c"/>
 <path d="M174 280.900l4.900 5.900h-3v7.500h-3.800v-7.500h-3z" fill="#5b8ccf" stroke="#2f5a94" stroke-width="0.900" stroke-linejoin="round"/>
 <!-- remove layer -->
 <rect x="187.800" y="282.800" width="10.800" height="10.500" fill="#eeeeee" stroke="#7e7e7e" stroke-width="1.200"/><rect x="195" y="291.300" width="6" height="4.400" rx="1.400" fill="#e83a4a"/><path d="M196.300 293.500h3.400" stroke="#fff" stroke-width="1.100"/>
</svg>
<!-- layer tree -->
<div class="tree" id="ltree" style="left:8px;top:302px;width:296px;height:372px;">
 <!-- row centres (tree coords = page - 303): 10,30,50,... -->
 <div class="ex" style="top:8px"></div><div class="cb" style="top:4px"></div>
 <svg class="ri" style="top:4px" viewBox="0 0 13 13" shape-rendering="crispEdges"><rect x="0" y="0" width="4.330" height="4.330" fill="#1d3350"/><rect x="4.330" y="0" width="4.340" height="4.330" fill="#a5c3e3"/><rect x="8.670" y="0" width="4.330" height="4.330" fill="#1d3350"/><rect x="0" y="4.330" width="4.330" height="4.340" fill="#98b9dd"/><rect x="4.330" y="4.330" width="4.340" height="4.340" fill="#24405f"/><rect x="8.670" y="4.330" width="4.330" height="4.340" fill="#b4cfea"/><rect x="0" y="8.670" width="4.330" height="4.330" fill="#1d3350"/><rect x="4.330" y="8.670" width="4.340" height="4.330" fill="#a5c3e3"/></svg>
 <div class="g" style="top:4.300px">gpw_v4_population_count_rev11_2...</div>
 <div class="sw" style="top:22px;background:#fff5f0"></div><div class="n" style="top:24.300px">0</div>
 <div class="sw" style="top:42px;background:#fee0d2"></div><div class="n" style="top:44.300px">1046</div>
 <div class="sw" style="top:62px;background:#fcbba1"></div><div class="n" style="top:64.300px">2092</div>
 <div class="sw" style="top:82px;background:#fc9272"></div><div class="n" style="top:84.300px">3138</div>
 <div class="sw" style="top:102px;background:#fb6a4a"></div><div class="n" style="top:104.300px">4185</div>
 <div class="sw" style="top:122px;background:#ef3b2c"></div><div class="n" style="top:124.300px">5231</div>
 <div class="sw" style="top:142px;background:#cb181d"></div><div class="n" style="top:144.300px">6277</div>
 <div class="sw" style="top:162px;background:#a50f15"></div><div class="n" style="top:164.300px">7242</div>
 <div class="sw" style="top:182px;background:#67000d"></div><div class="n" style="top:184.300px">8047</div>
 <!-- selected row -->
 <div class="abs" style="left:20px;top:200px;width:257px;height:20px;box-sizing:border-box;border:1px solid #9cc0ee;border-radius:3px;background:linear-gradient(180deg,#f2f8fe 0%,#dcebfc 100%);"></div>
 <div class="abs" style="left:41px;top:200px;width:236px;height:20px;box-sizing:border-box;border:1px dotted #222;"></div>
 <div class="ex" style="top:208px"></div><div class="cb" style="top:204px"></div>
 <svg class="abs" style="left:24px;top:204px" width="13" height="13" viewBox="0 0 13 13"><path d="M2.800 6.300l2.400 3.700 4.500-8" fill="none" stroke="#3a4f9a" stroke-width="1.900"/></svg>
 <svg class="ri" style="top:204px" viewBox="0 0 13 13" shape-rendering="crispEdges"><rect x="0" y="0" width="4.330" height="4.330" fill="#23588f"/><rect x="4.330" y="0" width="4.340" height="4.330" fill="#9cc2e8"/><rect x="8.670" y="0" width="4.330" height="4.330" fill="#23588f"/><rect x="0" y="4.330" width="4.330" height="4.340" fill="#8ab6e6"/><rect x="4.330" y="4.330" width="4.340" height="4.340" fill="#2f6098"/><rect x="8.670" y="4.330" width="4.330" height="4.340" fill="#a8ccf0"/><rect x="0" y="8.670" width="4.330" height="4.330" fill="#23588f"/><rect x="4.330" y="8.670" width="4.340" height="4.330" fill="#9cc2e8"/></svg>
 <div class="n" style="top:204.300px;left:63.200px;font-weight:bold;text-decoration:underline;letter-spacing:-0.230px;">population_change_2010_2000</div>
 <div class="sw" style="top:222px;background:#000"></div><div class="n" style="top:224.300px;letter-spacing:-0.340px">-34398.8</div>
 <div class="n" style="top:244.300px;letter-spacing:-0.500px">187927</div>
 <div class="ex" style="top:268px"></div><div class="cb" style="top:264px"></div>
 <svg class="ri" style="top:264px" viewBox="0 0 13 13" shape-rendering="crispEdges"><rect x="0" y="0" width="4.330" height="4.330" fill="#1d3350"/><rect x="4.330" y="0" width="4.340" height="4.330" fill="#a5c3e3"/><rect x="8.670" y="0" width="4.330" height="4.330" fill="#1d3350"/><rect x="0" y="4.330" width="4.330" height="4.340" fill="#98b9dd"/><rect x="4.330" y="4.330" width="4.340" height="4.340" fill="#24405f"/><rect x="8.670" y="4.330" width="4.330" height="4.340" fill="#b4cfea"/><rect x="0" y="8.670" width="4.330" height="4.330" fill="#1d3350"/><rect x="4.330" y="8.670" width="4.340" height="4.330" fill="#a5c3e3"/></svg>
 <div class="g" style="top:264.300px">gpw_v4_population_count_rev11_2...</div>
 <div class="sw" style="top:282px;background:#fff5f0"></div><div class="n" style="top:284.300px">0</div>
 <div class="sw" style="top:302px;background:#fee0d2"></div><div class="n" style="top:304.300px">1046</div>
 <div class="sw" style="top:322px;background:#fcbba1"></div><div class="n" style="top:324.300px">2092</div>
 <div class="sw" style="top:342px;background:#fc9272"></div><div class="n" style="top:344.300px">3138</div>
 <div class="sw" style="top:362px;background:#fb6a4a"></div><div class="n" style="top:364.300px">4185</div>
 <!-- v scrollbar -->
 <div class="abs" style="left:278px;top:0;width:16px;height:370px;background:#f0f0f0;"></div>
 <div class="abs" style="left:279px;top:18px;width:12px;height:258px;border:1px solid #979797;border-radius:2px;background:linear-gradient(90deg,#f4f4f4 0%,#e9e9eb 45%,#d6d6dc 55%,#dcdce2 100%);"></div>
 <svg class="abs" style="left:278px;top:0" width="16" height="370" viewBox="287 303 16 370"><path d="M295.200 309.500l3.800 4h-7.600z" fill="#333"/><path d="M295.200 665.500l3.800-4h-7.600z" fill="#333"/><path d="M291.500 448.500h7M291.500 450.500h7M291.500 452.500h7" stroke="#555" stroke-width="1"/></svg>
</div>
<!-- tooltip -->
<div class="abs" style="left:18px;top:313px;width:107px;height:33px;box-sizing:border-box;border:1px solid #767676;border-radius:3px;background:linear-gradient(180deg,#ffffff 0%,#e8e9f3 100%);box-shadow:2px 2px 3px rgba(0,0,0,.35);"></div>
<div class="t" style="left:24px;top:315.700px;font-weight:bold;color:#575757;letter-spacing:-0.130px;">Open the Layer</div>
<div class="t" style="left:24px;top:330.600px;font-weight:bold;color:#575757;letter-spacing:-0.350px;">Styling panel<span style="font-weight:normal"> (F7)</span></div>
<!-- mouse cursor -->
<svg class="abs" style="left:14px;top:294px" width="18" height="24" viewBox="14 294 18 24"><path d="M16 296.500v16.500l4-3.800 2.800 6.300 2.800-1.200-2.800-6.200h5.200z" fill="#fff" stroke="#000" stroke-width="1" stroke-linejoin="miter"/></svg>
<!-- MAP CANVAS -->
<div class="abs" style="left:308px;top:119px;width:704px;height:555px;box-sizing:border-box;border:1px solid #828790;background:#fff;overflow:hidden;">
<svg class="abs" style="left:0;top:0" width="702" height="553" viewBox="309 120 702 553" shape-rendering="crispEdges">
<rect x="309" y="120" width="702" height="553" fill="#272727"/>
<defs><radialGradient id="gl" cx="0.5" cy="0.5" r="0.5"><stop offset="0" stop-color="#fff" stop-opacity="0.03"/><stop offset="1" stop-color="#fff" stop-opacity="0"/></radialGradient></defs>
<ellipse cx="470" cy="420" rx="170" ry="45" fill="url(#gl)" transform="rotate(18 470 420)"/>
<ellipse cx="960" cy="320" rx="80" ry="110" fill="url(#gl)" opacity="0.5"/>
<path d="M309 673L309 558L313.5 578.7L322.6 594.5L329.3 605.8L333.9 619.3L337.2 630.6L342.9 640.8L348.5 646.9L354.2 649.1L359.8 646.4L363.2 641.9L365 636.3L370 633.5L375.6 632.4L377.9 629.5L380.1 625L379.5 618.2L389.2 616.6L388.5 605.8L388.5 592.2L391.4 585.5L394.4 576.4L394.8 568.5L393 556.1L392.1 544.8L395.9 539.2L401.6 534.7L406.8 533.2L410.2 527.5L416 526L422.6 525.3L426 517.4L436.1 508.4L445.1 500.5L454.2 494.8L463.2 484.7L472.2 477.9L483.5 473.4L490.3 467.7L494.8 463.2L492.6 456.4L495.9 450.8L503.8 447.9L509.5 445.1L511.7 448.5L521.9 448.5L535.4 446.3L544.5 444L550.1 445.1L555.8 441.8L558 436.1L561.4 432.7L565.9 437.2L568.2 451.9L573.8 462.1L580.6 470L587.4 475.6L591.6 484L599.5 490.8L604 499.8L606.3 508.8L604 517.9L601.8 530.3L608.5 533.7L619.8 534.8L625.5 529.2L634.5 524.7L640.1 520.1L642.4 515.6L646.9 520.1L651.4 528L653.7 539.3L657.1 552.9L660.5 565.3L665 575.4L667.8 591.8L666.9 603.5L664.9 619.2L662.9 631L661 640.8L662.9 650.6L672.7 656.5L679.6 664.3L685.5 673z" fill="#ffffff"/>
<path d="M714.9 673L712 668.2L705.1 667.3L697.3 663.3L693.3 654.5L689.4 644.7L686.5 636.9L682.5 632L677.6 630L676.7 621.2L678.6 611.4L682.5 599.6L687.5 587.8L688.7 577.7L689.8 569.8L701.1 569.1L700 575.4L701.1 581.1L707.8 581.6L714.7 580.6L721.6 587.5L729.4 593.3L733.3 603.1L739.2 609L742.2 605.1L746.1 612L752.9 616.9L762.7 620.8L759.8 628.6L758.8 640.4L762.7 641.4L768.6 635.5L778.4 629.6L786.3 622.7L789.2 615.9L798 612.9L806.9 610L815.7 604.1L822.5 600.2L825.5 592.4L828.4 579.6L827.1 567.8L825.8 560L823.5 546.4L817.9 537.4L812.2 529.5L803.2 522.7L795.3 514.8L787.4 508L782.9 499L777.2 493.4L772.7 486.6L776.1 476.4L785.1 468.5L788.5 462.9L798.7 460.6L804.3 453.9L814.5 448.2L823.5 449.3L830.3 450.5L832.6 456.1L834.8 467.4L842.7 468.5L846.1 465.1L842.7 459.5L846.1 453.9L855.1 450.5L866.4 448.2L877.7 446L886.7 441.4L892.4 438.5L895.8 442.6L902.5 436.9L911.6 433.5L920.6 431.3L929.6 427.9L940 422.3L947.4 420L954.3 412.2L961.2 406.3L969.1 401.4L976 396.4L982.9 391.5L979.9 387.6L980.9 380.6L986.8 376.7L989.8 370.8L994.7 364.9L997.7 358L1002.6 353L1007.6 350L1011 348L1011 673z" fill="#ffffff"/>
<path d="M1011 163L1000.6 163L994.7 169.9L984.9 174.8L976 178.7L974 185.7L967.1 189.6L961.2 190.6L954.3 187.6L949.3 194.5L953.3 200.5L961.2 203.4L970.1 202.4L974 208.4L970.1 212.3L973 217.2L980.9 218.2L986.8 213.3L994.7 209.3L1002.6 208.4L1011 212.3L1011 189.6L1006.6 191.6L1000.7 192.6L1003.6 187.6L1004.6 181.7L1011 176.8z" fill="#ffffff"/>
<path d="M1011 223.2L1000.6 226.1L996.7 232L988.8 234L984.9 238.9L978 242.9L974 250.8L980.9 254.7L988.8 258.7L992.8 266.6L996.7 274.5L999.7 284.3L1006.6 289.3L1009.5 291.5L1011 292z" fill="#ffffff"/>
<path d="M1011 312.6L1004.6 313.6L998.7 318.5L1006.6 318.5L1011 319.5z" fill="#ffffff"/>
<path d="M391 624L396 623.5L399 627.5L406 635L412.9 646.4L418.5 657.7L418.6 665L416 673L389.5 673L388 664.5L387 646.4L388 637L391.5 632L390 627z" fill="#272727"/>
<path d="M816.7 482.1L824.7 475.3L834.8 473L846.1 470.8L851.7 473L850.6 479.8L846.1 487.7L839.3 494.5L830.3 499.5L822.4 496.7L816.7 491.1z" fill="#272727"/>
<path d="M1011 393.5L1001.9 396.1L995.1 402.9L990.6 410.8L987.2 419.8L986.1 426.6L989.5 434.5L995.1 439L995.6 443.5L998.5 443.5L999.6 435.6L1005.3 427.7L1008.7 416.4L1011 405z" fill="#272727"/>
<path d="M1011 495.4L1001.9 492L992.9 493.2L990.6 504.5L990.5 512.7L989.2 525.4L982.9 526.7L982.9 535.6L988 545.7L993.1 550.8L997 549L998.5 553L995.6 557.2L994.3 563.5L999.4 567.3L1011 561z" fill="#272727"/>
<path d="M990.5 567.3L999.4 569.9L1008.3 573.7L1009.6 581.3L1004.5 587.7L999.4 581.3L994.3 575z" fill="#272727"/>
<path d="M983 588L987 586.4L990.5 588L989.5 592L985.5 594L983 592z" fill="#272727"/>
<path d="M977.8 599.1L981.6 597.8L984.2 601.6L980.4 613.1L967.7 624.5L956.2 635.9L946.1 646.1L941 653.7L940.2 649.9L943.5 642.3L951.1 633.4L963.8 622L974 611.8L975.3 601.6z" fill="#272727"/>
<path d="M933.4 673L935 668L939 664L941 660.5L944 664L946 661L948.6 673z" fill="#272727"/>
<path d="M581 566L585 568L585 580L583.5 590L582 600L579.5 614L576.5 612L577.5 600L578.5 588L579.5 575z" fill="#272727"/>
<rect x="377.5" y="630" width="3" height="1.5" fill="#272727"/>
<rect x="381.5" y="631.5" width="2" height="1.5" fill="#272727"/>
<rect x="385" y="629.5" width="2" height="1.5" fill="#272727"/>
<rect x="386.5" y="631.5" width="2" height="1.5" fill="#272727"/>
<rect x="580" y="632.5" width="2" height="2" fill="#272727"/>
<rect x="586" y="643" width="2" height="2" fill="#272727"/>
<rect x="589" y="647" width="4" height="4" fill="#272727"/>
<rect x="593.5" y="659" width="3" height="9" fill="#272727"/>
<rect x="1006" y="667" width="5" height="4" fill="#272727"/>
<rect x="978" y="418" width="2" height="2" fill="#272727"/>
<rect x="979.5" y="421" width="2" height="3" fill="#272727"/>
<rect x="1006" y="482" width="1.5" height="1.5" fill="#272727"/>
<rect x="1004" y="485" width="2" height="1.5" fill="#272727"/>
<rect x="1007.5" y="487" width="1.5" height="2" fill="#272727"/>
<rect x="871" y="517" width="1.5" height="1.5" fill="#272727"/>
<rect x="876.5" y="521" width="1.5" height="1.5" fill="#272727"/>
<rect x="866.5" y="526" width="1.5" height="1.5" fill="#272727"/>
<rect x="874.5" y="530.5" width="1.5" height="1.5" fill="#272727"/>
<rect x="854" y="535" width="1.5" height="1.5" fill="#272727"/>
<rect x="725" y="588" width="3" height="4" fill="#272727"/>
<rect x="736" y="612" width="3" height="3" fill="#272727"/>
<rect x="741" y="618" width="2" height="3" fill="#272727"/>
<rect x="753" y="625" width="3" height="3" fill="#272727"/>
<rect x="740" y="641" width="2" height="2" fill="#272727"/>
<rect x="823" y="621" width="2" height="2" fill="#272727"/>
<rect x="788" y="639" width="4" height="2" fill="#272727"/>
<rect x="994.5" y="586" width="2" height="2" fill="#272727"/>
<rect x="975" y="603" width="2" height="2" fill="#272727"/>
<rect x="996" y="596" width="1" height="1" fill="#272727"/>
<rect x="971" y="612" width="3" height="3" fill="#272727"/>
<rect x="656.8" y="566.0" width="2" height="1" fill="#272727"/>
<rect x="657.8" y="566.0" width="1" height="2" fill="#272727"/>
<rect x="649.1" y="569.0" width="1" height="1" fill="#272727"/>
<rect x="654.0" y="571.0" width="1" height="1.5" fill="#272727"/>
<rect x="660.0" y="571.0" width="2" height="1" fill="#272727"/>
<rect x="660.0" y="571.0" width="1" height="1" fill="#272727"/>
<rect x="662.4" y="574.0" width="1" height="1" fill="#272727"/>
<rect x="651.4" y="574.0" width="1" height="2" fill="#272727"/>
<rect x="655.4" y="574.0" width="1" height="1" fill="#272727"/>
<rect x="652.3" y="577.0" width="1" height="1" fill="#272727"/>
<rect x="660.3" y="577.0" width="1.5" height="1" fill="#272727"/>
<rect x="663.8" y="580.0" width="1" height="3" fill="#272727"/>
<rect x="659.3" y="583.0" width="2" height="3" fill="#272727"/>
<rect x="659.3" y="583.0" width="1.5" height="1.5" fill="#272727"/>
<rect x="662.3" y="583.0" width="1" height="1" fill="#272727"/>
<rect x="653.8" y="586.0" width="2" height="2" fill="#272727"/>
<rect x="655.8" y="586.0" width="1.5" height="1" fill="#272727"/>
<rect x="663.2" y="588.0" width="1.5" height="1.5" fill="#272727"/>
<rect x="656.2" y="588.0" width="2" height="1" fill="#272727"/>
<rect x="664.2" y="588.0" width="1.5" height="2" fill="#272727"/>
<rect x="656.7" y="591.0" width="2" height="1" fill="#272727"/>
<rect x="664.7" y="591.0" width="1.5" height="3" fill="#272727"/>
<rect x="665.6" y="594.0" width="1.5" height="3" fill="#272727"/>
<rect x="660.4" y="596.5" width="1" height="3" fill="#272727"/>
<rect x="660.4" y="596.5" width="1" height="1" fill="#272727"/>
<rect x="656.4" y="596.5" width="1" height="1.5" fill="#272727"/>
<rect x="662.2" y="599.0" width="2" height="3" fill="#272727"/>
<rect x="656.2" y="599.0" width="1" height="1.5" fill="#272727"/>
<rect x="654.1" y="601.5" width="1.5" height="1.5" fill="#272727"/>
<rect x="658.1" y="601.5" width="1.5" height="3" fill="#272727"/>
<rect x="660.1" y="601.5" width="2" height="1.5" fill="#272727"/>
<rect x="662.9" y="603.5" width="1" height="1.5" fill="#272727"/>
<rect x="664.5" y="606.5" width="2" height="1.5" fill="#272727"/>
<rect x="660.5" y="606.5" width="1.5" height="1" fill="#272727"/>
<rect x="653.3" y="608.5" width="1.5" height="2" fill="#272727"/>
<rect x="662.3" y="608.5" width="1" height="3" fill="#272727"/>
<rect x="653.3" y="608.5" width="2" height="3" fill="#272727"/>
<rect x="662.9" y="611.0" width="2" height="3" fill="#272727"/>
<rect x="663.9" y="611.0" width="1" height="1" fill="#272727"/>
<rect x="660.9" y="611.0" width="2" height="1.5" fill="#272727"/>
<rect x="663.7" y="613.0" width="1" height="1" fill="#272727"/>
<rect x="661.7" y="613.0" width="1" height="2" fill="#272727"/>
<rect x="662.3" y="616.0" width="1" height="3" fill="#272727"/>
<rect x="658.1" y="618.0" width="1.5" height="3" fill="#272727"/>
<rect x="662.1" y="618.0" width="1" height="3" fill="#272727"/>
<rect x="653.7" y="620.5" width="1.5" height="1" fill="#272727"/>
<rect x="660.7" y="620.5" width="1" height="2" fill="#272727"/>
<rect x="658.7" y="620.5" width="2" height="1.5" fill="#272727"/>
<rect x="659.2" y="623.5" width="1.5" height="1.5" fill="#272727"/>
<rect x="650.7" y="626.5" width="1.5" height="1" fill="#272727"/>
<rect x="650.2" y="629.5" width="1.5" height="1.5" fill="#272727"/>
<rect x="656.2" y="629.5" width="1" height="2" fill="#272727"/>
<rect x="657.6" y="632.5" width="1" height="3" fill="#272727"/>
<rect x="657.6" y="632.5" width="1" height="3" fill="#272727"/>
<rect x="660.1" y="635.0" width="1.5" height="3" fill="#272727"/>
<rect x="654.6" y="637.5" width="2" height="2" fill="#272727"/>
<rect x="654.6" y="637.5" width="1" height="1.5" fill="#272727"/>
<rect x="650.3" y="639.5" width="1" height="2" fill="#272727"/>
<rect x="656.3" y="639.5" width="2" height="1" fill="#272727"/>
<rect x="658.2" y="642.0" width="1" height="3" fill="#272727"/>
<rect x="656.2" y="642.0" width="2" height="1.5" fill="#272727"/>
<rect x="658.7" y="644.5" width="2" height="3" fill="#272727"/>
<rect x="652.7" y="644.5" width="1" height="1.5" fill="#272727"/>
<rect x="660.1" y="646.5" width="1" height="3" fill="#272727"/>
<rect x="658.1" y="646.5" width="2" height="2" fill="#272727"/>
<rect x="660.5" y="648.5" width="1" height="1" fill="#272727"/>
<rect x="649.5" y="648.5" width="1" height="3" fill="#272727"/>
<rect x="660.9" y="650.5" width="1.5" height="1.5" fill="#272727"/>
<rect x="656.9" y="650.5" width="1" height="2" fill="#272727"/>
<rect x="626.5" y="468" width="11.500" height="12.500" fill="#141414"/>
<rect x="629" y="470.500" width="6" height="6" fill="#050505"/>
<rect x="407" y="333" width="1" height="1" fill="#fff"/>
<rect x="393" y="341" width="1" height="1" fill="#fff"/>
<rect x="410" y="345" width="2" height="1.5" fill="#fff"/>
<rect x="412" y="346.5" width="2" height="1.5" fill="#fff"/>
<rect x="414" y="348" width="2" height="1.5" fill="#fff"/>
<rect x="450" y="361" width="1" height="1" fill="#fff"/>
<rect x="456.5" y="361" width="5" height="1.5" fill="#fff"/>
<rect x="461" y="362.5" width="3" height="1.5" fill="#fff"/>
<rect x="463" y="364" width="2" height="1.5" fill="#fff"/>
<rect x="469" y="358" width="2.5" height="1.5" fill="#fff"/>
<defs><radialGradient id="cg"><stop offset="0" stop-color="#fff" stop-opacity="1"/><stop offset="1" stop-color="#fff" stop-opacity="0"/></radialGradient></defs>
<circle cx="348.8" cy="343.8" r="4" fill="url(#cg)" opacity="0.35"/>
<circle cx="544.5" cy="414.5" r="3" fill="url(#cg)" opacity="0.55"/>
<circle cx="930.4" cy="176.5" r="4" fill="url(#cg)" opacity="0.5"/>
<circle cx="943.5" cy="188" r="2" fill="url(#cg)" opacity="0.3"/>
<circle cx="874.4" cy="207.2" r="2" fill="url(#cg)" opacity="0.3"/>
<circle cx="821" cy="260" r="2" fill="url(#cg)" opacity="0.3"/>
<circle cx="891" cy="253" r="2" fill="url(#cg)" opacity="0.25"/>
<circle cx="747.6" cy="313.8" r="3.5" fill="url(#cg)" opacity="0.35"/>
<circle cx="900" cy="315" r="2" fill="url(#cg)" opacity="0.3"/>
<circle cx="1006.6" cy="304.6" r="3.5" fill="url(#cg)" opacity="0.6"/>
<circle cx="944.3" cy="296.5" r="2" fill="url(#cg)" opacity="0.3"/>
<circle cx="695.5" cy="564.2" r="4" fill="url(#cg)" opacity="0.35"/>
<circle cx="787.3" cy="608" r="3.5" fill="url(#cg)" opacity="0.5"/>
<circle cx="760.4" cy="598.2" r="2" fill="url(#cg)" opacity="0.2"/>
<circle cx="631.1" cy="518.6" r="2.5" fill="url(#cg)" opacity="0.25"/>
<circle cx="884.5" cy="426" r="3.5" fill="url(#cg)" opacity="0.35"/>
<circle cx="897" cy="436" r="3" fill="url(#cg)" opacity="0.3"/>
<circle cx="354.2" cy="575" r="2.5" fill="url(#cg)" opacity="0.35"/>
<circle cx="392.6" cy="575.3" r="3" fill="url(#cg)" opacity="0.2"/>
<circle cx="989" cy="303" r="6" fill="url(#cg)" opacity="0.12"/>
<circle cx="975" cy="330" r="8" fill="url(#cg)" opacity="0.08"/>
</svg>
</div>
<!-- STATUS BAR (page coords) -->
<div class="field" style="left:12px;top:678px;width:199px;height:20px;border-color:#d9dce3;border-radius:2px;"></div>
<svg class="abs" style="left:19px;top:681px" width="16" height="15" viewBox="19 681 16 15"><circle cx="25.500" cy="687" r="4" fill="none" stroke="#8a8a8a" stroke-width="1.400"/><path d="M28.500 690l4 4" stroke="#8a8a8a" stroke-width="1.700" stroke-linecap="round"/></svg>
<div class="t" style="left:40px;top:682.200px;color:#808080;letter-spacing:-0.310px;">Type to locate (Ctrl+K)</div>
<div class="t" style="left:219px;top:682.200px;">Iden</div>
<div class="abs" style="left:249px;top:679px;width:50.500px;height:18px;overflow:hidden;"><div class="t" style="right:0;top:3.200px;letter-spacing:-0.250px;">Coordinate</div></div>
<div class="field" style="left:303px;top:678px;width:76px;height:19px;border-color:#dadada;"></div>
<div class="t" style="left:309.500px;top:682.200px;letter-spacing:-0.280px;">74.51,31.89</div>
<!-- mouse extents icon -->
<svg class="abs" style="left:382px;top:678px" width="19" height="19" viewBox="382 678 19 19"><ellipse cx="390.300" cy="687.300" rx="4.700" ry="6.700" transform="rotate(-30 390.300 687.300)" fill="#d9d9d9" stroke="#2e2e2e" stroke-width="1.700"/><path d="M385.300 685l7.300-3.600M388.300 681.200l2.400 5" stroke="#2e2e2e" stroke-width="1.300"/><path d="M386.500 683l2.500 4.500M390.500 681.500l1.500 3" stroke="#f4f4f4" stroke-width="0.900"/><circle cx="393" cy="691" r="1.800" fill="#fff" stroke="#2e2e2e" stroke-width="0.900"/><path d="M395 682l3.200-2.600M383 689l2.400.500M396.500 684.500l1.800-.500" stroke="#444" stroke-width="0.900"/></svg>
<div class="abs" style="left:411px;top:679px;width:21.500px;height:18px;overflow:hidden;"><div class="t" style="right:-1px;top:3.200px;letter-spacing:-0.600px;">Scale</div></div>
<div class="field" style="left:435px;top:678px;width:78px;height:19px;border-color:#dadada;overflow:hidden;"><div class="t" style="left:1.100px;top:3.200px;letter-spacing:-0.470px;">:20315693</div></div>
<svg class="abs" style="left:499px;top:685px" width="10" height="7" viewBox="0 0 10 7"><path d="M1 1.500h8l-4 4z" fill="#111"/></svg>
<!-- lock -->
<svg class="abs" style="left:523px;top:680px" width="15" height="17" viewBox="523 680 15 17"><path d="M526.500 688v-2.500c0-5 7.500-5 7.500 0v2.500" fill="none" stroke="#9a9a9a" stroke-width="2"/><rect x="524.300" y="687" width="12" height="8.500" rx="1.200" fill="#6a6a6a"/></svg>
<div class="abs" style="left:544px;top:679px;width:41px;height:18px;overflow:hidden;"><div class="t" style="right:-1.500px;top:3.200px;letter-spacing:-0.300px;">Magnifier</div></div>
<div class="field" style="left:588px;top:678px;width:81px;height:19px;border-color:#dadada;"></div>
<div class="t" style="left:591px;top:682.200px;letter-spacing:-0.350px;">100%</div>
<svg class="abs" style="left:654px;top:679px" width="15" height="18" viewBox="654 679 15 18"><rect x="654.500" y="679.500" width="13" height="8" fill="#f2f2f2" stroke="#b8b8b8" stroke-width="0.900"/><rect x="654.500" y="688.500" width="13" height="8" fill="#f2f2f2" stroke="#b8b8b8" stroke-width="0.900"/><path d="M661 681.500l2.800 3.500h-5.600z" fill="#4a5f9a"/><path d="M661 694.500l2.800-3.500h-5.600z" fill="#4a5f9a"/></svg>
<div class="abs" style="left:678.500px;top:679px;width:38px;height:18px;overflow:hidden;"><div class="t" style="right:-1.500px;top:3.200px;letter-spacing:-0.200px;">Rotation</div></div>
<div class="field" style="left:725px;top:678px;width:80px;height:19px;border-color:#dadada;"></div>
<div class="t" style="left:727.500px;top:682.200px;">0.0 °</div>
<svg class="abs" style="left:789px;top:679px" width="15" height="18" viewBox="654 679 15 18"><rect x="654.500" y="679.500" width="13" height="8" fill="#f2f2f2" stroke="#b8b8b8" stroke-width="0.900"/><rect x="654.500" y="688.500" width="13" height="8" fill="#f2f2f2" stroke="#b8b8b8" stroke-width="0.900"/><path d="M661 681.500l2.800 3.500h-5.600z" fill="#4a5f9a"/><path d="M661 694.500l2.800-3.500h-5.600z" fill="#4a5f9a"/></svg>
<!-- render checkbox -->
<div class="abs" style="left:811px;top:681px;width:11px;height:11px;border:1px solid #8e8f8f;background:linear-gradient(135deg,#dcdcdc 0%,#f6f6f6 100%);box-shadow:inset 0 0 0 1px #f4f4f4;"></div>
<svg class="abs" style="left:811px;top:681px" width="13" height="13" viewBox="0 0 13 13"><path d="M2.800 6.300l2.400 3.700 4.500-8" fill="none" stroke="#3a4f9a" stroke-width="1.900"/></svg>
<div class="t" style="left:828px;top:682.200px;letter-spacing:-0.550px;">Render</div>
<!-- crs icon -->
<svg class="abs" style="left:880px;top:680px" width="18" height="16" viewBox="880 680 18 16"><path d="M887 681h4l6.200 6.700h-16.400z" fill="#7f7f7f"/><path d="M885.500 684.500h7M883.500 686.500h11" stroke="#b5b5b5" stroke-width="0.800" stroke-dasharray="2 1"/><path d="M889 681.500v6" stroke="#a5a5a5" stroke-width="0.700"/>
<path d="M882.500 688.300h13c0 3.600-3 6.500-6.500 6.500s-6.500-2.900-6.500-6.500z" fill="#e4e4e4" stroke="#7f7f7f" stroke-width="1"/><path d="M883.300 691.500h11.400M889 688.500v6.300M885.800 688.500c0 2.700.700 4.600 1.700 5.800M892.200 688.500c0 2.700-.700 4.600-1.700 5.800" fill="none" stroke="#8c8c8c" stroke-width="0.800"/></svg>
<div class="t" style="left:900px;top:682.400px;font-size:11px;letter-spacing:-0.350px;">EPSG:4326</div>
<!-- messages -->
<svg class="abs" style="left:970px;top:680px" width="17" height="17" viewBox="970 680 17 17"><path d="M978.300 681c4.200 0 7.500 2.600 7.500 6 0 2.200-1.400 4-3.500 5.100l2.200 3.400-4.600-2.700c-.5.100-1 .100-1.600.100-4.200 0-7.500-2.600-7.500-6s3.300-6 7.500-6z" fill="#6a6a6a"/><circle cx="974.800" cy="687" r="1.100" fill="#fff"/><circle cx="978.300" cy="687" r="1.100" fill="#fff"/><circle cx="981.800" cy="687" r="1.100" fill="#fff"/></svg>
<!-- size grip -->
<svg class="abs" style="left:999px;top:689px" width="12" height="12" viewBox="0 0 12 12"><g fill="#b8b8b8"><rect x="9" y="1" width="2" height="2"/><rect x="5" y="5" width="2" height="2"/><rect x="9" y="5" width="2" height="2"/><rect x="1" y="9" width="2" height="2"/><rect x="5" y="9" width="2" height="2"/><rect x="9" y="9" width="2" height="2"/></g></svg>
</div><!-- /pg -->
</div><!-- /client -->
</body>
</html>
